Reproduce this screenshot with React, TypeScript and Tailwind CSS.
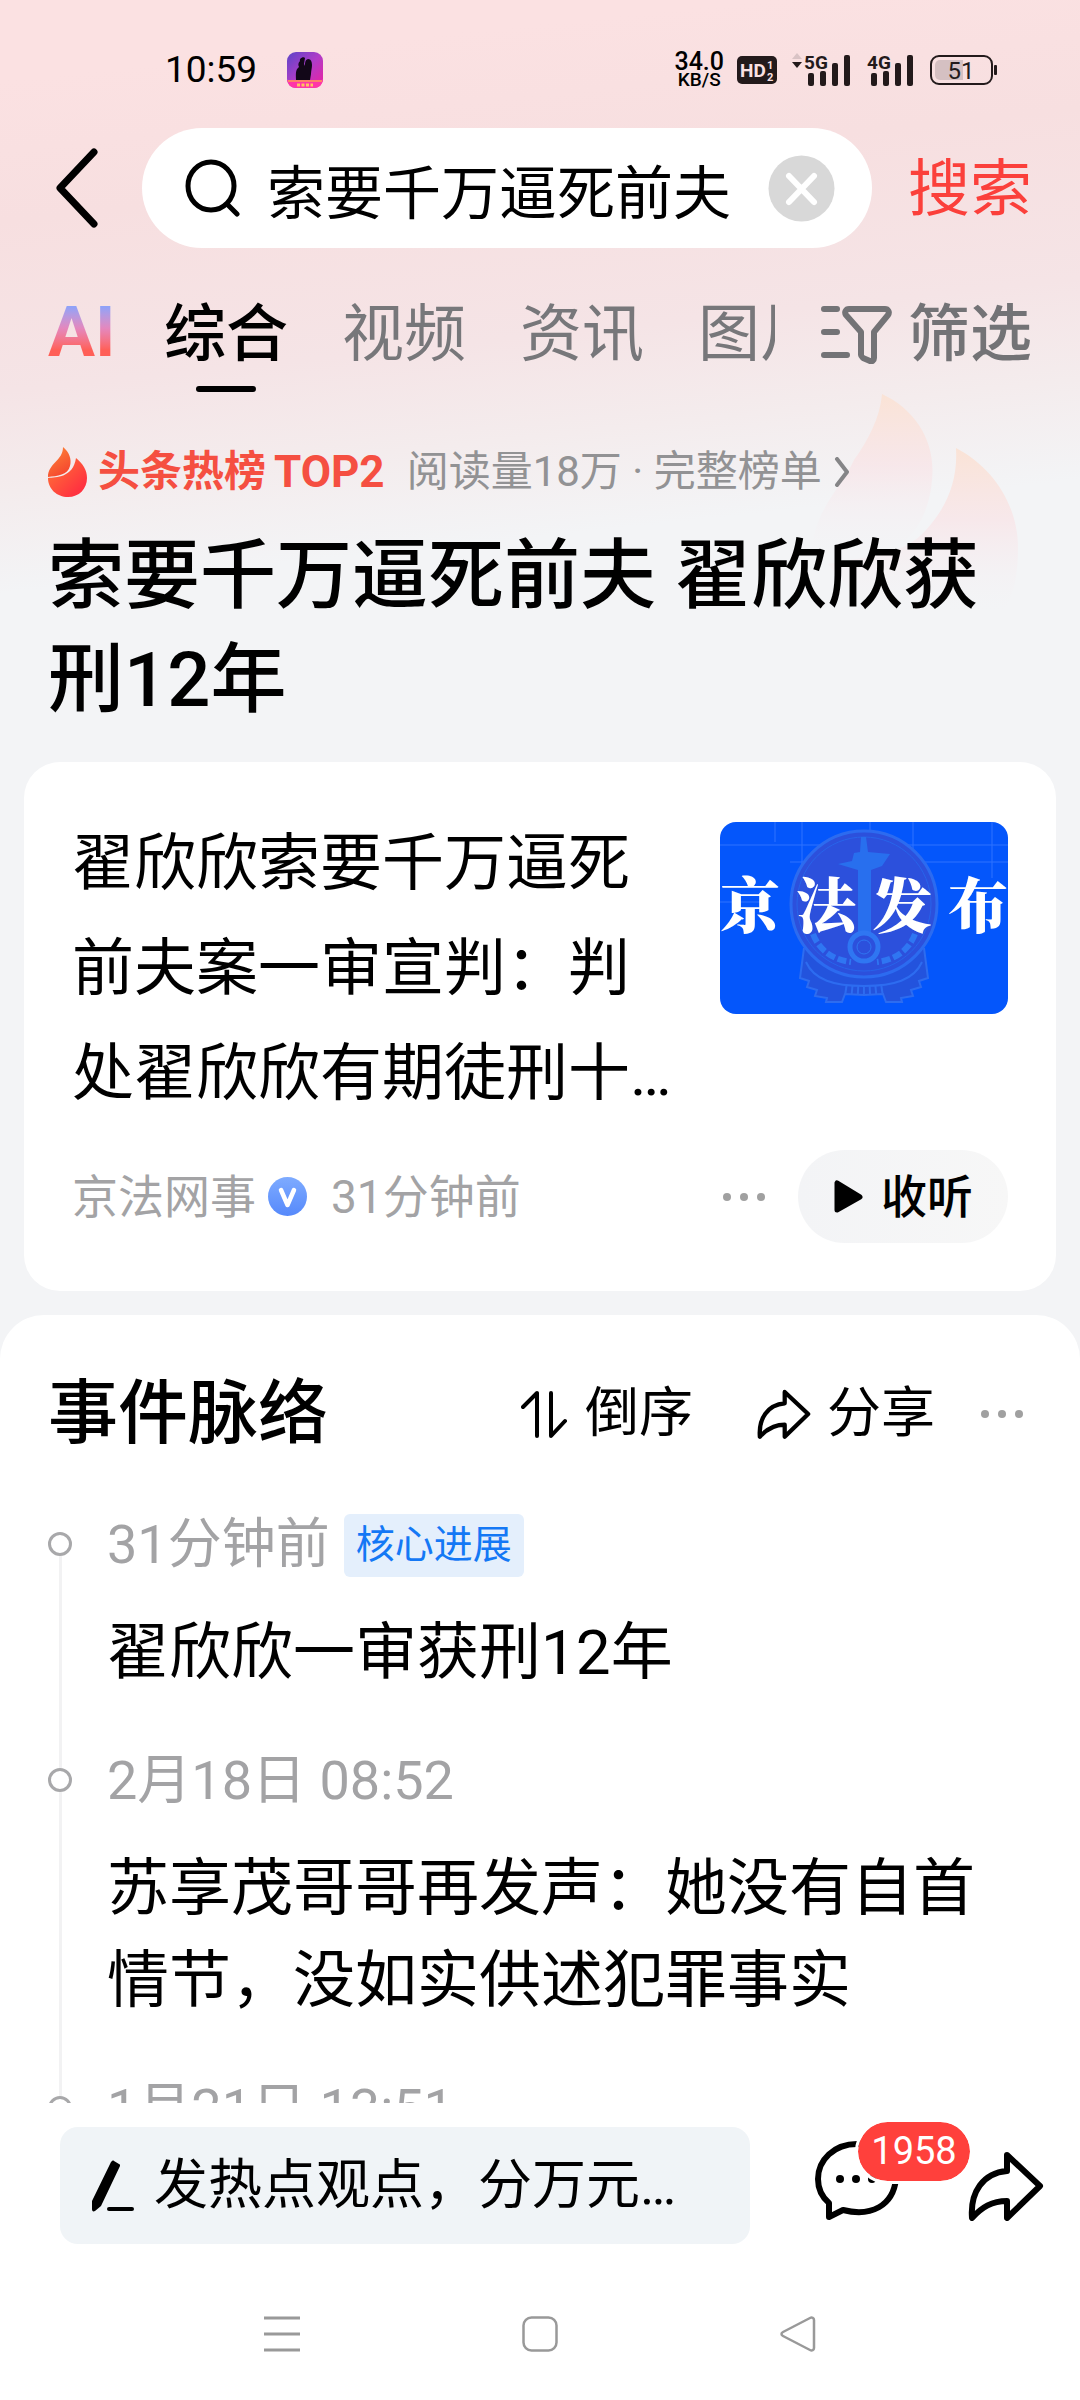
import { useState } from 'react';

const tabs = ['综合', '视频', '资讯', '图片'];

const events = [
  { time: '31分钟前', tag: '核心进展', text: '翟欣欣一审获刑12年' },
  { time: '2月18日 08:52', text: '苏享茂哥哥再发声：她没有自首情节，没如实供述犯罪事实' },
  { time: '1月21日 13:51', text: '翟欣欣涉敲诈勒索案开庭' },
];

function SignalBars({ label, arrows }: { label: string; arrows?: boolean }) {
  return (
    <svg width={arrows ? 60 : 47} height="36" viewBox={arrows ? '-13 0 60 36' : '0 0 47 36'} fill="#231a1b">
      {arrows && (
        <>
          <path d="M-12 7l5-6 5 6z" fill="#d9c3c5" />
          <path d="M-12 10h10l-5 6z" />
        </>
      )}
      <text x="0" y="17" fontSize="19" fontWeight="700" fontFamily="Roboto">{label}</text>
      <rect x="4" y="21" width="6" height="13" rx="2" />
      <rect x="16" y="19" width="6" height="15" rx="2" />
      <rect x="28" y="11" width="6" height="23" rx="2" />
      <rect x="40" y="3" width="6" height="31" rx="2" />
    </svg>
  );
}

function StatusBar() {
  return (
    <div className="flex h-9 items-center justify-between pl-[165px] pr-[83px]">
      <div className="flex items-center gap-[30px]">
        <span className="text-[37px] leading-9">10:59</span>
        <svg width="36" height="36" viewBox="0 0 36 36">
          <defs>
            <linearGradient id="app" x1="0" y1="0" x2="1" y2="1">
              <stop offset="0" stopColor="#5b45c8" />
              <stop offset="0.5" stopColor="#b03cc8" />
              <stop offset="1" stopColor="#ee1fa0" />
            </linearGradient>
          </defs>
          <rect width="36" height="36" rx="9" fill="url(#app)" />
          <path d="M9 28c0-5-1-10 3-13-1-2-1-4 1-6-1-3 4-5 5-3l-1 6 1 2c0-3 0-6 3-7 3 0 4 3 4 6s-1 6-1 9l-1 6z" fill="#120718" />
          <path d="M0 28h36c-1 5-4 8-9 8H9c-5 0-8-3-9-8z" fill="#ff35a8" />
          <path d="M1 29h34" stroke="#ff9a55" strokeWidth="1.5" />
          <path d="M10 33h16" stroke="#ffc45e" strokeWidth="3" strokeDasharray="3 1.5" />
        </svg>
      </div>
      <div className="flex items-center font-medium text-[#231a1b]">
        <div className="mr-[13px] flex flex-col items-center text-black">
          <span className="text-[25px] leading-5">34.0</span>
          <span className="text-[19px] leading-4">KB/S</span>
        </div>
        <svg className="mr-[14px]" width="40" height="28" viewBox="0 0 40 28" fontFamily="Roboto" fontWeight="700">
          <rect width="40" height="28" rx="5" fill="#231a1b" />
          <text x="3" y="21" fontSize="19" fill="#fae1e2">HD</text>
          <text x="30" y="13" fontSize="11" fill="#fae1e2">1</text>
          <text x="30" y="25" fontSize="11" fill="#fae1e2">2</text>
        </svg>
        <div className="mr-4"><SignalBars label="5G" arrows /></div>
        <div className="mr-4"><SignalBars label="4G" /></div>
        <svg width="67" height="30" viewBox="0 0 67 30">
          <rect x="1" y="1" width="61" height="28" rx="8" fill="none" stroke="#231a1b" strokeWidth="2" />
          <path d="M10 5h23v20H10a5 5 0 0 1-5-5V10a5 5 0 0 1 5-5z" fill="#d5c0c2" />
          <text x="31" y="24" fontSize="24" textAnchor="middle" fontFamily="Roboto" fontWeight="400" fill="#231a1b">51</text>
          <rect x="64" y="10" width="3" height="10" rx="1" fill="#231a1b" />
        </svg>
      </div>
    </div>
  );
}

function ShareIcon({ className }: { className: string }) {
  return (
    <svg className={className} viewBox="0 0 76 70" fill="none" stroke="currentColor" strokeWidth="6" strokeLinejoin="round">
      <path d="M39 4 72 35 39 67V50C24 50 14 56 4 67 2 41 15 22 39 20z" />
    </svg>
  );
}

function MoreDots() {
  return (
    <svg width="42" height="10" viewBox="0 0 42 10" fill="#a0a0a0">
      <circle cx="4" cy="5" r="4" />
      <circle cx="21" cy="5" r="4" />
      <circle cx="38" cy="5" r="4" />
    </svg>
  );
}

function SearchBar() {
  const [query, setQuery] = useState('索要千万逼死前夫');

  return (
    <form className="mt-10 flex items-center px-12" onSubmit={(e) => e.preventDefault()}>
      <button type="button" aria-label="返回" className="mr-8 w-[62px]">
        <svg className="ml-2" width="42" height="80" viewBox="0 0 42 80" fill="none" stroke="black" strokeWidth="7" strokeLinecap="round" strokeLinejoin="round">
          <path d="M38 4 4 40l34 36" />
        </svg>
      </button>
      <div className="flex h-[120px] min-w-0 flex-1 items-center rounded-full bg-white pl-[43px] pr-[37px]">
        <svg className="shrink-0" width="56" height="58" viewBox="0 0 56 58" fill="none" stroke="black" strokeWidth="5" strokeLinecap="round">
          <ellipse cx="26" cy="27" rx="23" ry="24" />
          <path d="M43 46l9 9" />
        </svg>
        <input
          aria-label="搜索内容"
          className="ml-[26px] h-[84px] min-w-0 flex-1 bg-transparent pt-px text-[58px] leading-[80px] outline-none"
          value={query}
          onChange={(e) => setQuery(e.target.value)}
        />
        <button type="button" aria-label="清除" className="shrink-0" onClick={() => setQuery('')}>
          <svg width="67" height="67" viewBox="0 0 67 67">
            <circle cx="33.5" cy="33.5" r="33" fill="#d8d8d8" />
            <path d="M21 21l25 26M46 21 21 47" stroke="white" strokeWidth="6" strokeLinecap="round" />
          </svg>
        </button>
      </div>
      <button type="submit" className="ml-9 pt-1 text-[62px] leading-[80px] text-[#fb403b]">搜索</button>
    </form>
  );
}

function TabBar() {
  const [active, setActive] = useState('综合');

  return (
    <div className="flex items-start px-12 pt-12">
      <nav className="flex min-w-0 flex-1 items-start gap-[54px] overflow-hidden">
        <button className="-mr-3 w-[74px] shrink-0 bg-linear-to-b from-[#8fa2f8] from-15% via-[#e487bd] via-45% to-[#ff5f57] to-75% bg-clip-text text-left text-[70px] font-bold leading-[72px] text-transparent">
          AI
        </button>
        {tabs.map((tab) => (
          <button
            key={tab}
            onClick={() => setActive(tab)}
            className={
              tab === active
                ? 'flex shrink-0 flex-col items-center text-[62px] font-medium leading-[78px] text-black'
                : 'flex shrink-0 flex-col items-center text-[62px] leading-[78px] text-[#77777a]'
            }
          >
            {tab}
            {tab === active && <span className="mt-3 h-1.5 w-[60px] rounded-full bg-black" />}
          </button>
        ))}
      </nav>
      <button className="ml-[46px] flex shrink-0 items-center gap-4 text-[62px] font-medium leading-[78px] text-[#737376]">
        <svg width="71" height="58" viewBox="0 0 71 58" fill="none" stroke="currentColor" strokeWidth="6" strokeLinecap="round" strokeLinejoin="round">
          <path d="M3 3h13M3 26h13M3 49h23" />
          <path d="M28 3h36c3 0 5 3 3 6L53 26v26c0 2-2 4-4 3l-7-3c-1-1-2-2-2-3V26L25 9c-2-3 0-6 3-6z" />
        </svg>
        筛选
      </button>
    </div>
  );
}

function FlameBackdrop() {
  return (
    <svg className="pointer-events-none absolute right-[60px] top-[394px]" width="216" height="248" viewBox="0 0 216 248">
      <defs>
        <linearGradient id="fl1" x1="0" y1="0" x2="0" y2="1">
          <stop offset="0" stopColor="#fae3d6" />
          <stop offset="0.4" stopColor="#f8e5e8" stopOpacity="0.8" />
          <stop offset="0.9" stopColor="#f4f2f5" stopOpacity="0" />
        </linearGradient>
      </defs>
      <path d="M78 0c34 16 54 48 50 86-2 26-12 48-28 62-26 8-60 12-92 32C2 120 36 98 50 66 64 46 76 24 78 0z" fill="url(#fl1)" />
      <path d="M152 54c38 20 62 58 62 100 0 26-4 46-14 64-60 40-130 10-176-48 40-8 76-8 98-34 20-22 32-48 30-82z" fill="url(#fl1)" />
    </svg>
  );
}

function HotHeadline() {
  return (
    <div className="px-12">
      <div className="mt-[50px] flex h-[60px] items-center">
        <svg width="39" height="50" viewBox="0 0 39 50">
          <defs>
            <linearGradient id="hot" x1="0" y1="0" x2="1" y2="1">
              <stop offset="0" stopColor="#ff7a35" />
              <stop offset="0.8" stopColor="#ff3340" />
            </linearGradient>
            <linearGradient id="hot2" x1="0" y1="0" x2="0.5" y2="1">
              <stop offset="0" stopColor="#ff8a38" />
              <stop offset="1" stopColor="#f5482f" />
            </linearGradient>
          </defs>
          <path d="M28 11c7 6 11 12 11 20 0 11-8 19-19 19S0 42 0 31c8-1 25 0 28-20z" fill="url(#hot)" />
          <path d="M15 0c6 5 9 12 7 19C20 28 9 29 0 30 0 16 15 14 15 0z" fill="url(#hot2)" />
        </svg>
        <span className="ml-[11px] text-[42px] font-bold leading-[60px] text-[#f54f41]">头条热榜</span>
        <span className="ml-2 text-[44px] font-bold leading-[60px] text-[#f54f41]">TOP2</span>
        <a href="#board" className="ml-[22px] flex items-center whitespace-nowrap text-[42px] leading-[60px] text-[#929294]">
          阅读量18万 · 完整榜单
          <svg className="ml-3" width="16" height="30" viewBox="0 0 16 30" fill="none" stroke="#858587" strokeWidth="4" strokeLinecap="round" strokeLinejoin="round">
            <path d="M3 2l10 13L3 28" />
          </svg>
        </a>
      </div>
      <h1 className="mt-[22px] text-[76px] font-medium leading-[104px]">索要千万逼死前夫 翟欣欣获刑12年</h1>
    </div>
  );
}

function Thumbnail() {
  return (
    <div className="relative mt-[11px] h-48 w-72 shrink-0 overflow-hidden rounded-2xl bg-[#0456fb]">
      <svg className="absolute inset-0" width="288" height="192" viewBox="0 0 288 192" fill="none">
        <path d="M0 23h288M70 40h218M55 0v20M82 0v48M150 0v60M193 0v50M272 0v56M0 80h40" stroke="#2f72ff" />
        <path d="M84 126l-4 30 9 3-2 6 10 3-2 6 12 2-1 4h16l3-8 19 1 19-1 3 8h16l-1-4 12-2-2-6 10-3-2-6 9-3-4-30" fill="#2353dd" stroke="#2d6cf0" strokeWidth="2" />
        <circle cx="144" cy="82" r="73" fill="#2c50dc" stroke="#2c6bf0" strokeWidth="3" />
        <circle cx="144" cy="82" r="67" stroke="#2864ea" />
        <path d="M141 15h5l2 15 22 2-8 12-11 4v65h-13V48l-20-6 14-3 2-8 6-1z" fill="#286fee" />
        <circle cx="144" cy="125" r="14" stroke="#2f76f2" strokeWidth="5" />
        <circle cx="144" cy="125" r="7" stroke="#2f76f2" />
        <path d="M93 112c6 16 20 26 38 28M195 112c-6 16-20 26-38 28" stroke="#2f76f2" strokeWidth="6" strokeDasharray="9 3" />
        <path d="M86 140c8 18 28 24 58 24s50-6 58-24" stroke="#2d6cf0" strokeWidth="2" />
        <path d="M125 167c13 2 25 2 38 0" stroke="#2d6cf0" strokeWidth="9" strokeDasharray="2 4" />
      </svg>
      <div className="relative flex justify-between pt-11 font-['Noto_Serif_CJK_SC','Noto_Sans_CJK_SC',serif] text-[60px] font-black leading-[72px] text-white">
        <span>京</span>
        <span>法</span>
        <span>发</span>
        <span>布</span>
      </div>
    </div>
  );
}

function NewsCard() {
  return (
    <article className="mx-6 mt-[30px] rounded-[36px] bg-white px-12 pb-12 pt-[49px]">
      <div className="flex items-start gap-9">
        <h2 className="min-w-0 flex-1 text-[62px] leading-[105px]">
          翟欣欣索要千万逼死前夫案一审宣判：判处翟欣欣有期徒刑十…
        </h2>
        <Thumbnail />
      </div>
      <div className="mt-6 flex items-center text-[46px] leading-[60px] text-[#a3a3a5]">
        <span>京法网事</span>
        <svg className="ml-3" width="39" height="39" viewBox="0 0 39 39">
          <defs>
            <linearGradient id="vip" x1="0" y1="0" x2="0" y2="1">
              <stop offset="0" stopColor="#7eabff" />
              <stop offset="1" stopColor="#5689fb" />
            </linearGradient>
          </defs>
          <circle cx="19.5" cy="19.5" r="19.5" fill="url(#vip)" />
          <path d="M13 13l6.5 15L26 13" fill="none" stroke="white" strokeWidth="4.5" strokeLinecap="round" strokeLinejoin="round" />
        </svg>
        <span className="ml-6">31分钟前</span>
        <button aria-label="更多" className="ml-auto mr-[33px]">
          <MoreDots />
        </button>
        <button className="flex h-[93px] items-center rounded-full bg-linear-to-r from-[#f3f4f6] to-[#f7f7f7] pl-9 pr-[35px] text-[46px] font-medium text-black">
          <svg className="mr-[18px]" width="29" height="33" viewBox="0 0 29 33">
            <path d="M3 3v27l23-13z" fill="black" stroke="black" strokeWidth="5" strokeLinejoin="round" />
          </svg>
          收听
        </button>
      </div>
    </article>
  );
}

function Timeline() {
  return (
    <section className="mt-6 rounded-t-[44px] bg-white px-12 pt-[50px]">
      <div className="flex h-[98px] items-center text-[54px] leading-[76px]">
        <h2 className="text-[70px] font-medium leading-[98px]">事件脉络</h2>
        <button className="ml-auto flex items-center gap-[18px]">
          <svg width="46" height="48" viewBox="0 0 46 48" fill="none" stroke="black" strokeWidth="4" strokeLinecap="round" strokeLinejoin="round">
            <path d="M2 17 16 3v43M30 3v43l14-15" />
          </svg>
          倒序
        </button>
        <button className="ml-16 flex items-center gap-4">
          <ShareIcon className="h-[50px] w-[54px]" />
          分享
        </button>
        <button aria-label="更多" className="ml-[46px] mr-[9px]">
          <MoreDots />
        </button>
      </div>
      <ol className="mt-[50px]">
        {events.map((item, i) => (
          <li key={item.time} className="flex gap-[35px]">
            <div className="flex w-6 shrink-0 flex-col items-center">
              <span className={i === 0 ? 'h-[19px] w-[3px]' : 'h-[19px] w-[3px] bg-[#f2f2f3]'} />
              <span className="h-6 w-6 rounded-full border-3 border-[#a8a8aa]" />
              <span className="w-[3px] flex-1 bg-[#f2f2f3]" />
            </div>
            <div className="min-w-0 flex-1 pb-[50px]">
              <div className="flex h-16 items-center gap-3.5 text-[54px] leading-[64px] text-[#a3a3a5]">
                <time>{item.time}</time>
                {item.tag && (
                  <span className="rounded-md bg-[#e4effc] px-3 text-[39px] leading-[63px] text-[#1478f5]">{item.tag}</span>
                )}
              </div>
              <p className="mt-[30px] text-[62px] leading-[92px]">{item.text}</p>
            </div>
          </li>
        ))}
      </ol>
    </section>
  );
}

function BottomBar() {
  return (
    <footer className="shrink-0 bg-white pt-6">
      <div className="flex items-center pl-[60px] pr-9">
        <label className="flex h-[117px] min-w-0 flex-1 items-center rounded-[18px] bg-[#f0f4f7] pl-8">
          <svg className="shrink-0" width="42" height="52" viewBox="0 0 42 52">
            <path d="M22 1l5 3c1 0 1 1 1 2L9 46l-6 5c-2 1-3 0-3-2v-8L19 2c1-1 2-2 3-1z" fill="black" />
            <path d="M17 49h23" stroke="black" strokeWidth="4" strokeLinecap="round" />
          </svg>
          <input
            aria-label="发表观点"
            placeholder="发热点观点，分万元…"
            className="ml-5 h-[76px] min-w-0 flex-1 bg-transparent text-[54px] leading-[76px] outline-none placeholder:text-black placeholder:opacity-100"
          />
        </label>
        <button aria-label="评论" className="relative mb-3 ml-16 w-[86px]">
          <svg width="86" height="80" viewBox="0 0 86 80" fill="none" stroke="black" strokeWidth="6" strokeLinecap="round" strokeLinejoin="round">
            <path d="M43 4C20 4 4 20 4 39c0 11 4 18 11 24v14l14-7c28 7 50-4 53-31C84 18 66 4 43 4z" />
            <g fill="black" stroke="none">
              <circle cx="26" cy="39" r="4" />
              <circle cx="42" cy="39" r="4" />
              <circle cx="58" cy="39" r="4" />
            </g>
          </svg>
          <span className="absolute -top-[18px] left-11 h-[59px] w-28 rounded-full bg-[#ff403c] text-center text-[38px] leading-[58px] text-white outline-3 outline-white">1958</span>
        </button>
        <button aria-label="分享" className="ml-[68px]">
          <ShareIcon className="h-[70px] w-[76px]" />
        </button>
      </div>
      <nav className="flex justify-center gap-[222px] pb-12 pt-[72px]">
        <button aria-label="最近任务">
          <svg width="36" height="36" viewBox="0 0 36 36" stroke="#999" strokeWidth="3">
            <path d="M0 2h36M0 18h36M0 34h36" />
          </svg>
        </button>
        <button aria-label="主屏幕">
          <svg width="36" height="36" viewBox="0 0 36 36" fill="none" stroke="#999" strokeWidth="2.5">
            <rect x="1.5" y="1.5" width="33" height="33" rx="8" />
          </svg>
        </button>
        <button aria-label="返回上一页">
          <svg width="36" height="36" viewBox="0 0 36 36" fill="none" stroke="#999" strokeWidth="2.5" strokeLinejoin="round">
            <path d="M3 16 30 2c2-1 4 0 4 2v28c0 2-2 3-4 2L3 20c-2-1-2-3 0-4z" />
          </svg>
        </button>
      </nav>
    </footer>
  );
}

export default function App() {
  return (
    <div className="flex h-screen flex-col bg-[#f3f4f6] font-['Roboto','Noto_Sans_CJK_SC',sans-serif] text-black">
      <div className="relative min-h-0 flex-1 overflow-hidden bg-[linear-gradient(174deg,#fbe1e2_80px,#f7dfe0_220px,#f5e4e6_390px,#f4eced_490px,#f3f4f6_590px)]">
        <FlameBackdrop />
        <div className="relative">
          <header className="pt-[52px]">
            <StatusBar />
            <SearchBar />
            <TabBar />
          </header>
          <main>
            <HotHeadline />
            <NewsCard />
            <Timeline />
          </main>
        </div>
      </div>
      <BottomBar />
    </div>
  );
}
